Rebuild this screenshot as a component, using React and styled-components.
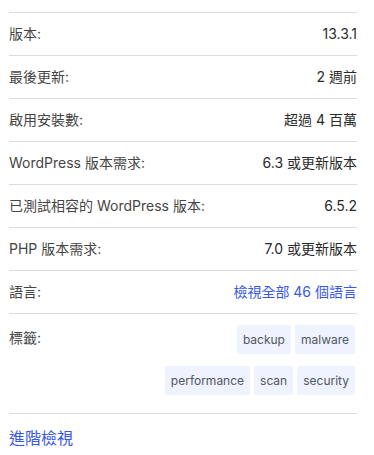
import React from "react";
import styled, { createGlobalStyle } from "styled-components";

const Global = createGlobalStyle`
  html, body { margin: 0; padding: 0; background: #fff; }
  body {
    font-family: Inter, "Noto Sans CJK TC", "Noto Sans", sans-serif;
    color: #1e1e1e;
    -webkit-font-smoothing: antialiased;
  }
`;

const Wrap = styled.div`
  padding: 12px 17px 0 9px;
`;

const List = styled.ul`
  list-style: none;
  margin: 0;
  padding: 0;
`;

const Row = styled.li`
  display: flex;
  justify-content: space-between;
  align-items: ${(p) => (p.$top ? "flex-start" : "center")};
  border-top: 1px solid #dcdcde;
  border-bottom: ${(p) => (p.$last ? "1px solid #dcdcde" : "none")};
  padding: ${(p) => (p.$top ? "11px 0 18px" : "11px 0")};
  font-size: 14px;
  line-height: 20px;
`;

const Label = styled.span`
  color: #454545;
  padding-top: ${(p) => (p.$pad ? "3px" : "0")};
  white-space: nowrap;
`;

const Value = styled.span`
  color: #2a2a2a;
  text-align: right;
`;

const Link = styled.a`
  color: #3858e9;
  text-decoration: none;
`;

const Tags = styled.div`
  display: flex;
  flex-wrap: wrap;
  justify-content: flex-end;
  gap: 12px 4px;
  margin-right: 2px;
  max-width: 200px;
`;

const Tag = styled.a`
  display: inline-block;
  background: #eff2ff;
  color: #50575e;
  font-size: 12px;
  line-height: 21px;
  padding: 4px 6px;
  border-radius: 2px;
  text-decoration: none;
`;

const Advanced = styled.a`
  display: block;
  padding-top: 14px;
  font-size: 16px;
  line-height: 20px;
  color: #3858e9;
  text-decoration: none;
`;

const rows = [
  ["版本:", "13.3.1"],
  ["最後更新:", "2 週前"],
  ["啟用安裝數:", "超過 4 百萬"],
  ["WordPress 版本需求:", "6.3 或更新版本"],
  ["已測試相容的 WordPress 版本:", "6.5.2"],
  ["PHP 版本需求:", "7.0 或更新版本"],
];

const tags = ["backup", "malware", "performance", "scan", "security"];

export default function App() {
  return (
    <>
      <Global />
      <Wrap>
        <List>
          {rows.map(([k, v]) => (
            <Row key={k}>
              <Label>{k}</Label>
              <Value>{v}</Value>
            </Row>
          ))}
          <Row>
            <Label>語言:</Label>
            <Link href="#">檢視全部 46 個語言</Link>
          </Row>
          <Row $top $last>
            <Label $pad>標籤:</Label>
            <Tags>
              {tags.map((t) => (
                <Tag key={t} href="#">{t}</Tag>
              ))}
            </Tags>
          </Row>
        </List>
        <Advanced href="#">進階檢視</Advanced>
      </Wrap>
    </>
  );
}
